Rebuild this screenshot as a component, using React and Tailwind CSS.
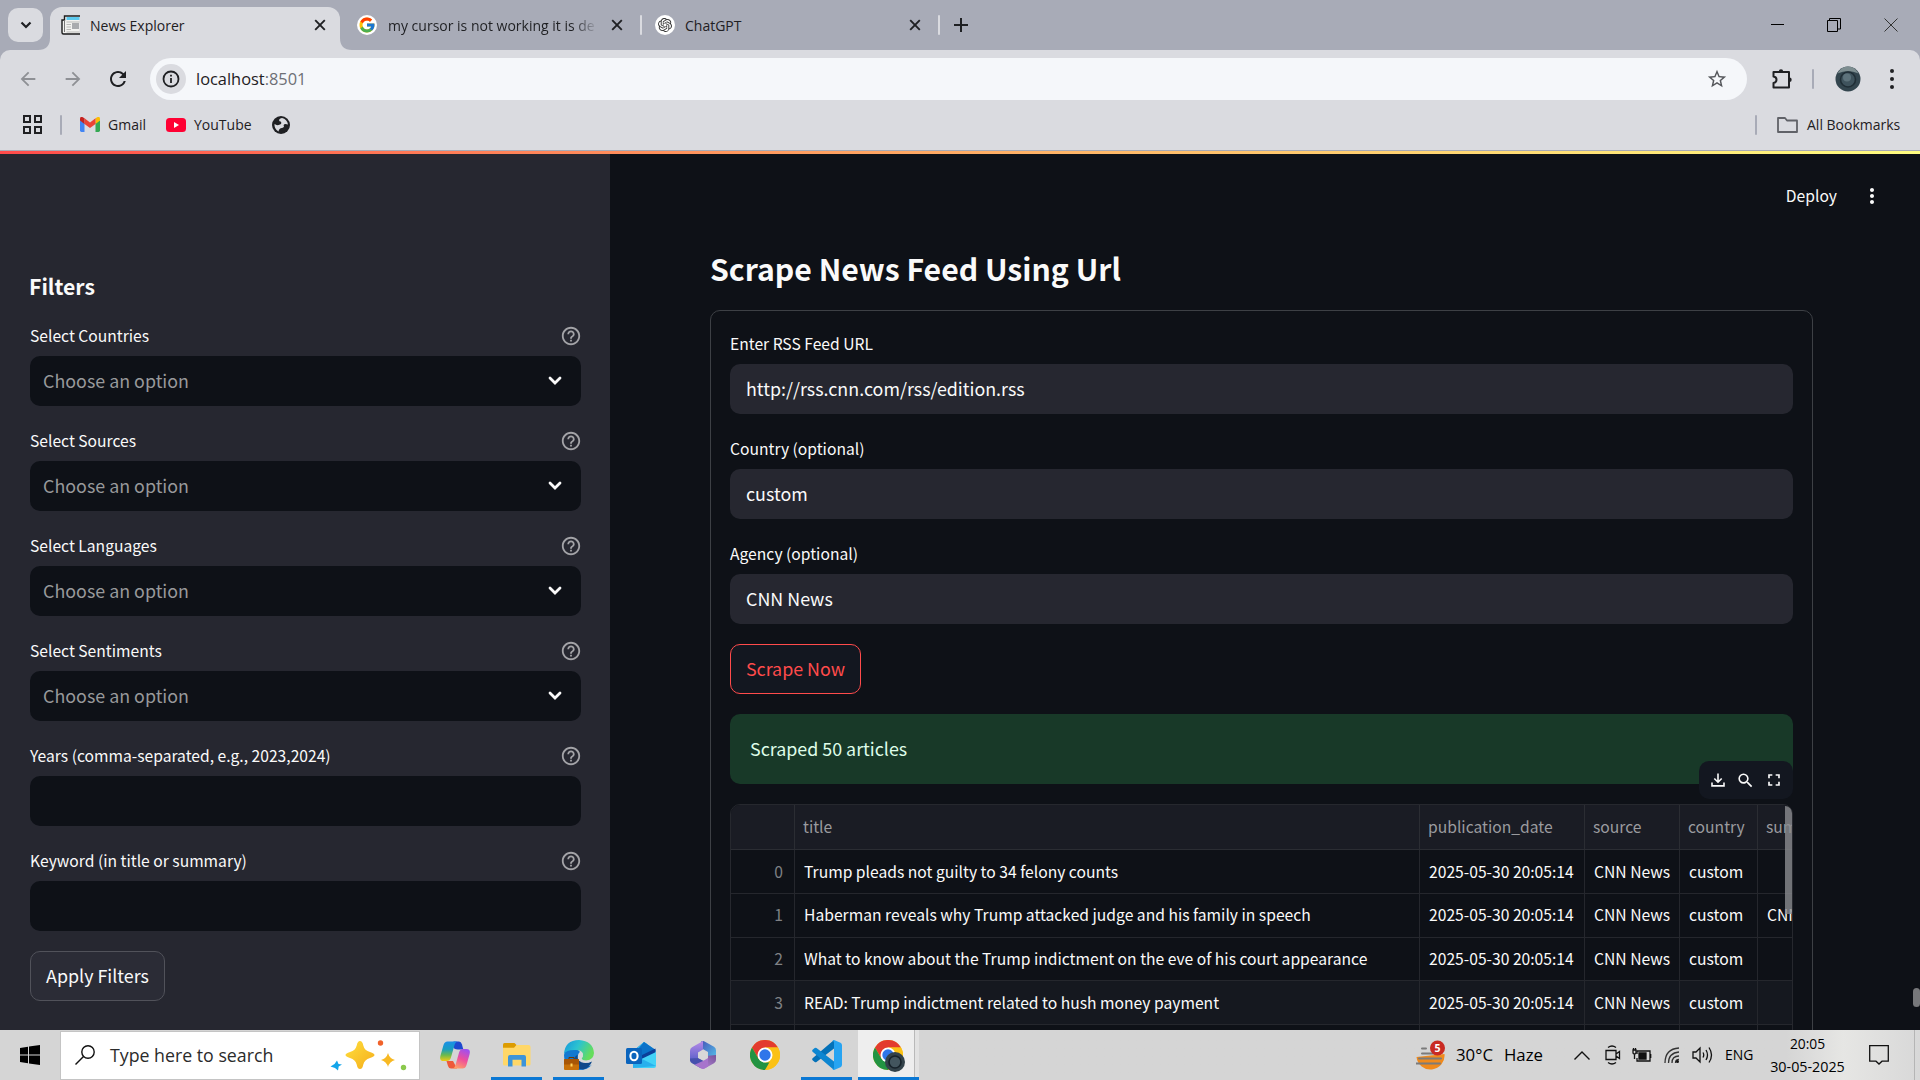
import React from "react";
import { FcGoogle } from "react-icons/fc";
import { SiOpenai } from "react-icons/si";
import {
  MdArrowBack,
  MdArrowForward,
  MdRefresh,
  MdStarOutline,
  MdHelpOutline,
  MdSearch,
  MdFullscreen,
  MdMoreVert,
} from "react-icons/md";

const UI = "font-['Open_Sans','Noto_Sans',sans-serif]";
const APP = "font-['Noto_Sans_CJK_SC','Noto_Sans',sans-serif]";

function Close({ className = "" }) {
  return (
    <svg viewBox="0 0 12 12" className={`size-3 shrink-0 ${className}`} fill="none" stroke="#1f2023" strokeWidth="1.9">
      <path d="M1.2 1.2 10.8 10.8M10.8 1.2 1.2 10.8" />
    </svg>
  );
}

function NewsIcon() {
  return (
    <svg viewBox="0 0 20 20" className="ml-[21px] size-5 shrink-0">
      <path d="M3.5 1h15v17.5H2.5Q1 18.500 1 17V5.500h2.500z" fill="#f2f2f0" />
      <path d="M19 1H3.500V5H1v12.500Q1 19 2.500 19H19" fill="none" stroke="#1c1c1c" strokeWidth="1.4" />
      <path d="M3.500 5v12" stroke="#777" />
      <path d="M5.500 2h13v3h-13z" fill="#5cc9ee" />
      <path d="M11 8h7v6h-7z" fill="#a9abae" />
      <path d="M5.500 7h13M5.500 9.500H10M5.500 12H10M5.500 14.500H10M5.500 17h13" stroke="#b9b9b7" />
    </svg>
  );
}

function TabStrip() {
  return (
    <div className="flex h-[50px] shrink-0 items-end bg-[#a8abb7] text-[14px] text-[#1f2023]">
      <button className="mb-2 ml-2 flex h-[34px] w-[35px] shrink-0 items-center justify-center rounded-[10px] bg-[#dadbe0]">
        <svg viewBox="0 0 12 8" className="h-2 w-3" fill="none" stroke="#1f2023" strokeWidth="2.2">
          <path d="M1.500 1.500 6 6l4.500-4.500" />
        </svg>
      </button>
      <svg viewBox="0 0 12 12" className="-ml-[5px] size-3 shrink-0" fill="#dadbe0">
        <path d="M12 0v12H0Q12 12 12 0" />
      </svg>
      <div className="flex h-[43px] w-[290px] shrink-0 items-center rounded-t-xl bg-[#dadbe0] pb-[7px]">
        <div className="-ml-[10px] flex items-center">
          <NewsIcon />
        </div>
        <span className="ml-[9px] w-[200px] whitespace-nowrap">News Explorer</span>
        <Close className="ml-6" />
      </div>
      <svg viewBox="0 0 12 12" className="size-3 shrink-0" fill="#dadbe0">
        <path d="M0 0v12h12Q0 12 0 0" />
      </svg>
      <div className="flex h-[50px] grow items-center">
        <div className="ml-[5px] flex size-5 items-center justify-center rounded-full bg-white">
          <FcGoogle className="size-[18px]" />
        </div>
        <span className="ml-[11px] w-[210px] overflow-hidden bg-linear-to-r from-[#1f2023] from-88% to-transparent bg-clip-text whitespace-nowrap text-transparent">
          my cursor is not working it is de
        </span>
        <Close className="ml-[13px]" />
        <span className="ml-[17px] h-5 w-[2px] rounded bg-[#dadbe0]" />
        <div className="ml-[13px] flex size-5 items-center justify-center rounded-full bg-white">
          <SiOpenai className="size-[14px] text-[#333]" />
        </div>
        <span className="ml-[10px] w-[210px]">ChatGPT</span>
        <Close className="ml-[14px]" />
        <span className="ml-[17px] h-5 w-[2px] rounded bg-[#dadbe0]" />
        <svg viewBox="0 0 14 14" className="ml-[14px] size-3.5" stroke="#1f2023" strokeWidth="2">
          <path d="M7 0v14M0 7h14" />
        </svg>
        <svg viewBox="0 0 13 13" className="mr-[43px] mb-1 ml-auto size-[13px]" stroke="#000">
          <path d="M0 7.500h13" />
        </svg>
        <svg viewBox="0 0 14 14" className="mr-[43px] size-3.5" fill="none" stroke="#000">
          <path d="M.500 2.500h10v11H.500zM2.500 2.500v-2h11v10.500h-3" />
        </svg>
        <svg viewBox="0 0 14 14" className="mr-[22px] size-3.5" fill="none" stroke="#333">
          <path d="m.500.500 13 13M13.500.500l-13 13" />
        </svg>
      </div>
    </div>
  );
}

function Toolbar() {
  return (
    <div className="shrink-0 bg-[#a8abb7]">
      <div className="flex h-[58px] items-center rounded-t-[10px] bg-[#dadbe0]">
        <MdArrowBack className="ml-[17px] size-[22px] text-[#8e9095]" />
        <MdArrowForward className="ml-[23px] size-[22px] text-[#8e9095]" />
        <MdRefresh className="ml-[22px] size-6 text-[#1f2023]" />
        <div className="ml-5 flex h-[42px] w-[1597px] items-center rounded-full bg-[#f5f7fa]">
          <div className="ml-[6px] flex size-[30px] items-center justify-center rounded-full bg-[#dadbe0]">
            <svg viewBox="0 0 18 18" className="size-[18px]" fill="none" stroke="#1f2023" strokeWidth="1.8">
              <circle cx="9" cy="9" r="7.500" />
              <path d="M9 8v5M9 4.800v1.800" />
            </svg>
          </div>
          <span className="ml-[10px] pt-px text-[16.4px] text-[#1f2023]">
            localhost<span className="text-[#6d6f75]">:8501</span>
          </span>
          <MdStarOutline className="mr-[19px] ml-auto size-[22px] text-[#55575b]" />
        </div>
        <svg viewBox="0 0 22 22" className="ml-6 size-[22px]" fill="none" stroke="#1f2023" strokeWidth="2" strokeLinejoin="round">
          <path d="M2.500 4h15.500v15.500H2.500v-4.500q3-.5 3-3.200t-3-3.200z" />
          <path d="M7.800 3.500a2.200 2.200 0 0 1 4.400 0zM18.500 9.600a2.200 2.200 0 0 1 0 4.400z" fill="#1f2023" stroke="none" />
        </svg>
        <span className="ml-[19px] h-5 w-[2px] rounded bg-[#a8abb7]" />
        <svg viewBox="0 0 26 26" className="ml-[21px] size-[26px]">
          <circle cx="13" cy="13" r="12.500" fill="#33454e" />
          <path d="M2.500 7.500Q6 .500 13 .500t10.500 7Q13 3 2.500 7.500" fill="#7d8d90" />
          <circle cx="13" cy="13.500" r="7.500" fill="#3f535d" stroke="#202e36" strokeWidth="1.600" />
          <circle cx="12" cy="11.500" r="4" fill="#5d727b" />
        </svg>
        <svg viewBox="0 0 6 22" className="ml-[28px] h-[22px] w-[6px]" fill="#1f2023">
          <circle cx="3" cy="3" r="2" />
          <circle cx="3" cy="11" r="2" />
          <circle cx="3" cy="19" r="2" />
        </svg>
      </div>
    </div>
  );
}

function Bookmarks() {
  return (
    <div className="flex h-[43px] shrink-0 items-center border-b border-[#a8abb7] bg-[#dadbe0] pb-[9px] text-[14px] text-[#1f2023]">
      <svg viewBox="0 0 19 19" className="ml-[23px] size-[19px]" fill="none" stroke="#1f2023" strokeWidth="2">
        <path d="M1 1h6v6H1zM12 1h6v6h-6zM1 12h6v6H1zM12 12h6v6h-6z" />
      </svg>
      <span className="ml-[18px] h-5 w-[2px] rounded bg-[#a8abb7]" />
      <svg viewBox="0 0 20 15" className="ml-[18px] h-[15px] w-5">
        <path d="M0 3v10.600Q0 15 1.400 15H4.500V6z" fill="#4285f4" />
        <path d="M20 3v10.600q0 1.400-1.400 1.400h-3.100V6z" fill="#34a853" />
        <path d="M15.500 1.300V7L20 3.500V2q0-3-2.800-1.800z" fill="#fbbc04" />
        <path d="M4.500 7V1.300L10 5.400l5.500-4.100V7L10 11z" fill="#ea4335" />
        <path d="M0 2v1.500L4.500 7V1.300L2.800.200Q0-1 0 2" fill="#c5221f" />
      </svg>
      <span className="ml-[8px] w-[51px]">Gmail</span>
      <svg viewBox="0 0 20 14" className="ml-[7px] h-[14px] w-5">
        <rect width="20" height="14" rx="3.500" fill="#f03" />
        <path d="M8 4v6l5-3z" fill="#fff" />
      </svg>
      <span className="ml-[8px] w-[58px]">YouTube</span>
      <svg viewBox="0 0 18 18" className="ml-[20px] size-[18px]">
        <circle cx="9" cy="9" r="9" fill="#1f2023" />
        <path d="M10 2q-4 1-2.500 3.200Q10 5.500 9 8q-2 1.500-4.500 1l-2-1Q2 13 6.500 15.500 7 12 10 12q3-1 1.500-2.800 1-2.200 4.500-.700Q15 3 10 2" fill="#dadbe0" />
      </svg>
      <span className="ml-auto h-5 w-[2px] rounded bg-[#a8abb7]" />
      <svg viewBox="0 0 21 16" className="ml-5 h-4 w-[21px]" fill="none" stroke="#606268" strokeWidth="1.800" strokeLinejoin="round">
        <path d="M1 1h7l2 2.500h10V15H1z" />
      </svg>
      <span className="mr-[18px] ml-[9px] w-[95px] whitespace-nowrap">All Bookmarks</span>
    </div>
  );
}

function SideField({ label, select }) {
  return (
    <div className="mb-[18px] h-[87px]">
      <div className="flex h-[37px] items-center justify-between pb-[3px]">
        <span className="text-[15.65px] leading-none">{label}</span>
        <MdHelpOutline className="-mr-px size-[22px] text-[#a3a3a7]" />
      </div>
      <div className="flex h-[50px] items-center justify-between rounded-[10px] bg-[#0e1117] pr-[18px] pl-[13px]">
        <span className="text-[17.88px] leading-none text-[#98999b]">{select ? "Choose an option" : ""}</span>
        {select && (
          <svg viewBox="0 0 16 11" className="mb-px h-[11px] w-4" fill="none" stroke="#fafafa" strokeWidth="2.800" strokeLinecap="round">
            <path d="M3 3l5 5 5-5" />
          </svg>
        )}
      </div>
    </div>
  );
}

function Sidebar() {
  return (
    <aside className={`${APP} w-[610px] shrink-0 bg-[#262730] pr-[29px] pl-[30px] text-[#fafafa]`}>
      <h3 className="-ml-px pt-[120px] text-[21.2px] leading-[24px] font-bold">Filters</h3>
      <div className="mt-[21px]">
        <SideField label="Select Countries" select />
        <SideField label="Select Sources" select />
        <SideField label="Select Languages" select />
        <SideField label="Select Sentiments" select />
        <SideField label="Years (comma-separated, e.g., 2023,2024)" />
        <SideField label="Keyword (in title or summary)" />
      </div>
      <button className="mt-[20px] flex h-[50px] w-[135px] items-center justify-center rounded-[10px] border border-[#51525a] bg-[#2b2c36] text-[17.88px] leading-none whitespace-nowrap">
        Apply Filters
      </button>
    </aside>
  );
}

function FormField({ label, value }) {
  return (
    <div className="mb-[18px] h-[87px]">
      <div className="flex h-[37px] items-center pb-[3px] text-[15.65px] leading-none">{label}</div>
      <div className="flex h-[50px] items-center rounded-[10px] bg-[#262730] pl-4 text-[17.88px] leading-none">{value}</div>
    </div>
  );
}

const COLS = "grid grid-cols-[64px_625px_165px_95px_78px_180px]";
const ROWS = [
  ["0", "Trump pleads not guilty to 34 felony counts", ""],
  ["1", "Haberman reveals why Trump attacked judge and his family in speech", "CNN"],
  ["2", "What to know about the Trump indictment on the eve of his court appearance", ""],
  ["3", "READ: Trump indictment related to hush money payment", ""],
  ["", "", ""],
];

function DataTable() {
  return (
    <div className="relative mt-5 h-[400px] rounded-t-[10px] border border-[#26282e] text-[15.67px] leading-none">
      <div className="h-full overflow-hidden rounded-t-[9px]">
        <div className={`${COLS} h-[45px] w-max border-b border-[#2b2d33] bg-[#1a1c24] text-[#9a9b9f] *:flex *:items-center *:border-r *:border-[#2b2d33] *:pl-[8px]`}>
          <div />
          <div>title</div>
          <div>publication_date</div>
          <div>source</div>
          <div>country</div>
          <div>summary</div>
        </div>
        {ROWS.map(([n, title, sum], i) => (
          <div
            key={i}
            className={`${COLS} h-[43.75px] w-max border-b border-[#25272d] *:flex *:items-center *:border-r *:border-[#25272d] *:pl-[9px] *:whitespace-nowrap ${i === 3 ? "bg-[#15181f]" : ""}`}
          >
            <div className="justify-end pr-[11px] text-[#7f8185]">{n}</div>
            <div>{title}</div>
            <div>{n && "2025-05-30 20:05:14"}</div>
            <div>{n && "CNN News"}</div>
            <div>{n && "custom"}</div>
            <div>{sum}</div>
          </div>
        ))}
      </div>
      <div className="absolute top-px right-0 h-[108px] w-[7px] rounded-tr-[8px] bg-[#8b8c90]/80" />
      <div className="absolute -top-[44px] -right-px flex h-[38px] w-[94px] items-center rounded-[10px] bg-[#131720] pl-[11px]">
        <svg viewBox="0 0 16 16" className="size-4" fill="none" stroke="#fafafa" strokeWidth="1.600">
          <path d="M8 1.500v8.500M4.300 6.500 8 10.200l3.700-3.700M2 10.500v3.400h12v-3.400" />
        </svg>
        <MdSearch className="ml-[10px] size-[19px]" />
        <MdFullscreen className="ml-[9px] size-5" />
      </div>
    </div>
  );
}

function Main() {
  return (
    <main className={`${APP} flex grow flex-col overflow-hidden bg-[#0e1117] text-[#fafafa]`}>
      <div className="flex h-[84px] shrink-0 items-center justify-end">
        <span className="text-[15.65px] leading-none">Deploy</span>
        <MdMoreVert className="mr-[36px] ml-[23px] size-[24px]" />
      </div>
      <h2 className="ml-[100px] h-[72px] shrink-0 pt-[8px] text-[30.2px] leading-[44px] font-bold">Scrape News Feed Using Url</h2>
      <div className="ml-[100px] h-[740px] w-[1103px] shrink-0 rounded-t-[10px] border border-[#3d4045] px-[19px] pt-4">
        <FormField label="Enter RSS Feed URL" value="http://rss.cnn.com/rss/edition.rss" />
        <FormField label="Country (optional)" value="custom" />
        <FormField label="Agency (optional)" value="CNN News" />
        <button className="mt-[20px] flex h-[50px] w-[131px] items-center justify-center rounded-[10px] border border-[#ff4b4b] bg-[#131720] text-[17.88px] leading-none whitespace-nowrap text-[#ff4b4b]">
          Scrape Now
        </button>
        <div className="mt-5 flex h-[70px] items-center rounded-[10px] bg-[#183928] pl-5 text-[17.88px] leading-none text-[#dffde9]">
          Scraped 50 articles
        </div>
        <DataTable />
      </div>
    </main>
  );
}

function Sparkles() {
  return (
    <svg viewBox="0 0 78 34" className="h-[34px] w-[78px]">
      <defs>
        <linearGradient id="star" x1="0" y1="0" x2="1" y2="1">
          <stop offset="0" stopColor="#ffdf3d" />
          <stop offset="1" stopColor="#f5ad1b" />
        </linearGradient>
      </defs>
      <path d="M30 3q2.500 0 3.300 4.500Q34.500 12.500 40 14q4.500 1.300 4.500 3T40 20q-5.500 1.500-6.700 6.500Q32.500 31 30 31t-3.300-4.500Q25.500 21.500 20 20q-4.500-1.300-4.500-3T20 14q5.500-1.500 6.700-6.500Q27.500 3 30 3" fill="url(#star)" />
      <path d="M58 15q1.500 5.500 7 7-5.500 1.500-7 7-1.500-5.500-7-7 5.500-1.500 7-7" fill="#f8b923" />
      <path d="M7 22.500 8.500 26l3.500.500-3.300 2L8 32.500l-3-2.500-4.500-1.500L4.500 26z" fill="#14a5ea" />
      <circle cx="50.500" cy="5" r="2.700" fill="#f1622a" />
      <circle cx="73.500" cy="29.500" r="2.700" fill="#8bc94c" />
    </svg>
  );
}

function Copilot() {
  return (
    <svg viewBox="0 0 30 28" className="h-7 w-[30px]">
      <defs>
        <linearGradient id="cpA" x1="0" y1="0" x2="0" y2="1">
          <stop offset="0" stopColor="#1a8fe8" />
          <stop offset=".4" stopColor="#1a9ec0" />
          <stop offset=".7" stopColor="#6cba4d" />
          <stop offset="1" stopColor="#f0cb14" />
        </linearGradient>
        <linearGradient id="cpB" x1=".7" y1="0" x2=".3" y2="1">
          <stop offset="0" stopColor="#a050f0" />
          <stop offset=".5" stopColor="#ee4f9c" />
          <stop offset="1" stopColor="#ffa066" />
        </linearGradient>
      </defs>
      <path d="M13.500.500h5.500q2 0 3 3l1.300 5h-5.500q-4 0-5-3z" fill="#1e49cf" />
      <path d="M6.500 20 8 25q.8 2.500 3 2.500h6L13 20z" fill="#ee5a3a" />
      <path d="M7.500.500H18q-2.500 0-3.500 3.500l-3.700 13q-1 3-4 3H3.500q-4.500 0-3-5.500L3.500 4q1-3.500 4-3.500" fill="url(#cpA)" />
      <path d="M22.500 27.500H12q2.500 0 3.500-3.500l3.700-13q1-3 4-3h3.300q4.500 0 3 5.500L26.500 24q-1 3.500-4 3.500" fill="url(#cpB)" />
    </svg>
  );
}

function Explorer() {
  return (
    <svg viewBox="0 0 28 24" className="h-6 w-7">
      <path d="M0 1.500Q0 0 1.500 0h10l2 2v3H0z" fill="#dc9b00" />
      <path d="M13.500 2h12Q27.500 2 27.500 4v17q0 1.500-1.500 1.500H1.500Q0 22.500 0 21V4.800h11z" fill="#ffd768" />
      <path d="M5 23.500V14q0-2 2-2h14q2 0 2 2v9.500h-4.500v-6.700h-9v6.700z" fill="#3d94d9" />
    </svg>
  );
}

function Edge() {
  return (
    <svg viewBox="0 0 30 30" className="size-[30px]">
      <defs>
        <linearGradient id="edA" x1="0" y1="0" x2="1" y2=".4">
          <stop offset="0" stopColor="#1596dd" />
          <stop offset=".5" stopColor="#2cc3d0" />
          <stop offset="1" stopColor="#65dd5c" />
        </linearGradient>
      </defs>
      <path d="M0 15Q1 7 9 8.500q8 1.500 7 5-3 2-2 6 3 6.500 10 6.500 2.500 0 4-1.500Q24 30 15 30 0 29 0 15" fill="#1279d2" />
      <path d="M10 20q0 9 9 9.500Q25.500 28 28 21.500q-9 4-14-2-1-2-.5-4.500-3 1-3.500 5" fill="#114a8b" />
      <path d="M0 14Q1 0 15 0q14 1 15 13-.5 7-7.500 7.500-5 0-5-2 2-1.500 1.500-4.500Q18 10 12 10 2.500 9.500 0 14" fill="url(#edA)" />
      <path d="M14 18.500q-.5-6 2.500-6.500 2.500.5 2.200 3-.7 2.500-1.200 3.500 1 2.500 5 2.300 4.500-.3 6-2.800-.5 4-4 4.500-8.500.5-10.500-4" fill="#d6d9db" />
      <rect y="19" width="15" height="11" rx="1" fill="#c87108" />
      <path d="M0 20q0-1 1-1h13q1 0 1 1v4.500H0z" fill="#a85605" />
      <path d="M5 19v-1.500h5V19" fill="none" stroke="#6b3600" />
      <rect x="6.500" y="23.500" width="2" height="3" fill="#ffd45c" />
    </svg>
  );
}

function Outlook() {
  return (
    <svg viewBox="0 0 30 28" className="h-7 w-[30px]">
      <path d="M7 10 18 1l11.500 8v4L12 22H7z" fill="#199be0" />
      <path d="m10 8 8-7 3.500 2.300L9 14z" fill="#36b7ec" />
      <path d="m18 1 11.500 8-3 5L12 17V8z" fill="#0a72c9" />
      <path d="M29.500 7.500v5L14 22v-7z" fill="#0c3e99" />
      <path d="M7 22 30 11v14q0 2-2 2H9q-2 0-2-2z" fill="#43d2f7" />
      <path d="M7 27 30 25 16 18 7 22z" fill="#29b0ed" />
      <rect y="7" width="16" height="16" rx="1.500" fill="#0a64bd" />
      <ellipse cx="8" cy="15" rx="3.600" ry="4.300" fill="none" stroke="#fff" strokeWidth="2.100" />
    </svg>
  );
}

function M365() {
  return (
    <svg viewBox="0 0 26 28" className="h-7 w-[26px]">
      <defs>
        <linearGradient id="mA" x1="0" y1="0" x2="0" y2="1">
          <stop offset="0" stopColor="#b78be8" />
          <stop offset="1" stopColor="#5a5fc9" />
        </linearGradient>
        <linearGradient id="mB" x1="0" y1="0" x2="1" y2="1">
          <stop offset="0" stopColor="#4656b8" />
          <stop offset="1" stopColor="#55c3ec" />
        </linearGradient>
        <linearGradient id="mC" x1="0" y1="1" x2="1" y2="0">
          <stop offset="0" stopColor="#c08fe0" />
          <stop offset="1" stopColor="#75519a" />
        </linearGradient>
      </defs>
      <path d="M11 .700q2-1.200 4 0l9 5q2 1.200 2 3.500V19l-8-4v-4l-7-4z" fill="url(#mB)" />
      <path d="M13 0 2 6.300Q0 7.500 0 9.800V20l8-3v-5.500L13 8.500z" fill="url(#mA)" />
      <path d="M26 14v5q0 2-2 3.200l-9 5.100q-2 1.200-4 0l-3-2 10-6v-4.500z" fill="url(#mC)" />
      <path d="M0 17.500V19q0 2.200 2 3.300l9 5q3-1 3.500-7L8 17z" fill="#4650ad" />
      <path d="M4.500 23.700 11 27.300q2 1.200 4 0l3-1.700V17l-5 3z" fill="#a774cc" />
      <path d="m13 9 4.500 2.700v5L13 19.500l-4.500-2.800v-5z" fill="#d8d8d8" />
    </svg>
  );
}

function Chrome({ className = "" }) {
  return (
    <svg viewBox="0 0 30 30" className={`size-[30px] ${className}`}>
      <circle cx="15" cy="15" r="15" fill="#fbc116" />
      <path d="M2 7.500A15 15 0 0 1 28 7.500H15L8.500 18.700z" fill="#e33b2e" />
      <path d="M2 7.500 8.500 18.700 15 22.500h6.500L15 30A15 15 0 0 1 2 7.500" fill="#229342" />
      <path d="M21.500 18.700 15 30a15 15 0 0 0 13-22.500H15z" fill="#fbc116" />
      <circle cx="15" cy="15" r="7.500" fill="#fff" />
      <circle cx="15" cy="15" r="5.700" fill="#2f76ea" />
    </svg>
  );
}

function VSCode() {
  return (
    <svg viewBox="0 0 30 30" className="size-[30px]">
      <path d="M22 0v8.500L4.500 22q-1 .7-1.800 0L.600 20.200q-.9-1 0-2z" fill="#0471b8" />
      <path d="M22 30v-8.500L4.500 8q-1-.7-1.800 0L.600 9.800q-.9 1 0 2z" fill="#0d86d1" />
      <path d="m22 0 6.500 2.800q1.500.7 1.500 2.500v19.400q0 1.800-1.500 2.500L22 30q-1 0-1.500-1 1.500.5 1.500-1.500v-25q0-1.800-1.500-1.500.5-1 1.500-1" fill="#27a4f2" />
    </svg>
  );
}

function TaskItem({ children, open }) {
  return (
    <div className="flex h-[50px] w-[51px] flex-col items-center">
      <div className="flex h-[47px] items-center pt-[3px]">{children}</div>
      {open && <div className="h-[3px] w-full bg-[#0b78d4]" />}
    </div>
  );
}

function Taskbar() {
  return (
    <footer className="flex h-[50px] shrink-0 items-center bg-linear-to-r from-[#d5d5d5] from-93% via-[#e6e6e4] via-96% to-[#d8d8d8] text-black">
      <svg viewBox="0 0 20 20" className="ml-5 size-5">
        <path d="M0 3 8 1.800v7.700H0zM9 1.600 20 0v9.500H9zM0 10.500h8v7.700L0 17zM9 10.500h11V20L9 18.400z" />
      </svg>
      <div className="ml-[20px] flex h-[49px] w-[360px] items-center border border-[#c4c4c4] bg-white">
        <svg viewBox="0 0 20 20" className="ml-[14px] size-5" fill="none" stroke="#111" strokeWidth="1.400">
          <circle cx="13" cy="7" r="6.200" />
          <path d="M8.500 11.500.500 19.500" />
        </svg>
        <span className="ml-[15px] w-[164px] text-[17.75px] whitespace-nowrap text-[#2b2b2b]">Type here to search</span>
        <div className="ml-[56px]">
          <Sparkles />
        </div>
      </div>
      <div className="ml-[9px] flex gap-[11px]">
        <TaskItem><Copilot /></TaskItem>
        <TaskItem open><Explorer /></TaskItem>
        <TaskItem open><Edge /></TaskItem>
        <TaskItem><Outlook /></TaskItem>
        <TaskItem><M365 /></TaskItem>
        <TaskItem><Chrome /></TaskItem>
        <TaskItem open><VSCode /></TaskItem>
      </div>
      <div className="ml-[6px] flex h-[50px] w-[61px] flex-col border-r-[4px] border-[#e2e2e2] bg-[#eeeeee]">
        <div className="flex h-[47px] items-center border-r border-[#b9b9b9] pt-[3px] pl-[15px]">
          <div className="relative">
            <Chrome />
            <svg viewBox="0 0 20 20" className="absolute top-[12px] left-[12px] size-5">
              <circle cx="10" cy="10" r="10" fill="#33424a" />
              <circle cx="10" cy="10" r="6" fill="#43555e" stroke="#17222a" strokeWidth="1.600" />
            </svg>
          </div>
        </div>
        <div className="-mr-1 h-[3px] bg-[#0b78d4]" />
      </div>
      <svg viewBox="0 0 30 30" className="mb-px ml-auto size-[30px]">
        <path d="M28.500 14a14 14 0 0 1-28 3z" fill="#f08a1d" />
        <path d="M6 8.500h4M6 13.500h18M3 18.500h22M0 23.500h24" stroke="#7b7b7b" strokeWidth="2" strokeLinecap="round" />
        <circle cx="21.500" cy="8" r="7.500" fill="#c92a23" />
        <text x="21.500" y="11.800" textAnchor="middle" fontSize="10.500" fontWeight="700" fill="#fff">5</text>
      </svg>
      <span className="ml-[10px] w-[38px] text-[16.8px] whitespace-nowrap">30°C</span>
      <span className="ml-[10px] w-[40px] text-[16.8px]">Haze</span>
      <svg viewBox="0 0 16 9" className="ml-[30px] h-[9px] w-4" fill="none" stroke="#111" strokeWidth="1.400">
        <path d="M.500 8.500 8 1l7.500 7.500" />
      </svg>
      <svg viewBox="0 0 16 20" className="ml-[15px] h-5 w-4" fill="none" stroke="#111" strokeWidth="1.300">
        <path d="M1 5.500h10v9H1zM11 9l3.500-2.500v7L11 11M3 2.500Q7-.500 11 2.500M3 17.500q4 3 8 0" />
      </svg>
      <svg viewBox="0 0 20 16" className="ml-[11px] h-4 w-5" fill="none" stroke="#111" strokeWidth="1.300">
        <path d="M5 7V4h13v10H5v-3M18.700 7v4" />
        <path d="M7 6h7v6H7z" fill="#111" />
        <path d="M1 3v2.500q0 1.500 1.500 1.500T4 5.500V3zM1.500 1v2M3.500 1v2M2.500 7v5" />
      </svg>
      <svg viewBox="0 0 16 18" className="ml-[12px] h-[18px] w-4" fill="none" stroke="#333" strokeWidth="1.300">
        <path d="M1 17Q1 3 15 2M4.500 17Q4.500 7 15 6M8 17q0-7 7-7M11.500 17q0-3.500 3.500-3.500" />
        <circle cx="13.500" cy="15.500" r="1.500" fill="#111" stroke="none" />
      </svg>
      <svg viewBox="0 0 21 18" className="ml-[12px] h-[18px] w-[21px]" fill="none" stroke="#111" strokeWidth="1.300">
        <path d="M1 6h3l4-4v14l-4-4H1zM11 6.500q1.500 2.500 0 5M14 4q3 5 0 10M17 1.500q5 7.500 0 15" />
      </svg>
      <span className="ml-[12px] w-[29px] text-[13.9px]">ENG</span>
      <div className="ml-[15px] flex w-[77px] flex-col items-center text-[14.3px] leading-[23px] whitespace-nowrap">
        <span className="text-[13.8px]">20:05</span>
        <span>30-05-2025</span>
      </div>
      <svg viewBox="0 0 20 20" className="ml-[23px] size-5" fill="none" stroke="#111" strokeWidth="1.300">
        <path d="M.700.700h18.600v15.500H13L10 19l-3-2.800H.700z" />
      </svg>
      <span className="mr-[5px] ml-[25px] h-full w-px bg-[#b5b5b5]" />
    </footer>
  );
}

export default function App() {
  return (
    <div className={`${UI} flex h-[1080px] w-[1920px] flex-col overflow-hidden bg-[#0e1117]`}>
      <TabStrip />
      <Toolbar />
      <Bookmarks />
      <div className="relative flex h-[879px] shrink-0 flex-col">
        <div className="h-[3px] shrink-0 bg-linear-to-r from-[#ff4b4b] to-[#fffd80]" />
        <div className="flex min-h-0 grow">
          <Sidebar />
          <Main />
        </div>
        <div className="absolute top-[837px] right-0 h-[19px] w-[7px] rounded-full bg-[#77787b]" />
      </div>
      <Taskbar />
    </div>
  );
}
